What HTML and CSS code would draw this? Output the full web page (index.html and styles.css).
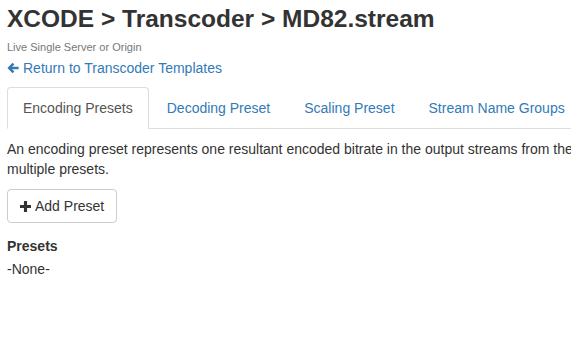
FILE: index.html
```html
<!DOCTYPE html>
<html lang="en">
<head>
    <meta charset="UTF-8">
    <meta name="viewport" content="width=device-width, initial-scale=1.0">
    <title>MD82.stream</title>
    <link rel="stylesheet" href="styles.css">
</head>
<body>
    <div class="page">
        <h1 class="title">XCODE &gt; Transcoder &gt; MD82.stream</h1>
        <div class="subtitle">Live Single Server or Origin</div>
        <a class="back-link" href="#">
            <svg class="back-icon" viewBox="0 0 14 14" width="12" height="12">
                <path d="M6.5 0.8 L0.5 7 L6.5 13.2 L8.6 11.1 L5.9 8.6 L13.5 8.6 L13.5 5.4 L5.9 5.4 L8.6 2.9 Z" fill="#337ab7"/>
            </svg>
            Return to Transcoder Templates
        </a>

        <ul class="tabs">
            <li class="tab active"><a href="#">Encoding Presets</a></li>
            <li class="tab"><a href="#">Decoding Preset</a></li>
            <li class="tab"><a href="#">Scaling Preset</a></li>
            <li class="tab"><a href="#">Stream Name Groups</a></li>
        </ul>

        <p class="intro">An encoding preset represents one resultant encoded bitrate in the output streams from the multiple presets.</p>

        <button class="btn">
            <svg class="plus-icon" viewBox="0 0 12 12" width="11" height="11">
                <path d="M4.3 0 H7.7 V4.3 H12 V7.7 H7.7 V12 H4.3 V7.7 H0 V4.3 H4.3 Z" fill="#333"/>
            </svg>
            Add Preset
        </button>

        <div class="presets">
            <div class="presets-label">Presets</div>
            <div class="presets-value">-None-</div>
        </div>
    </div>
</body>
</html>
```

FILE: styles.css
```css
html, body {
    overflow: hidden;
}
body {
    font-family: "Liberation Sans", Arial, sans-serif;
    font-size: 14px;
    line-height: 20px;
    color: #333;
    background-color: #fff;
    margin: 0;
    padding: 0 7px;
}
.page {
    width: 600px;
}
.title {
    font-size: 24.5px;
    font-weight: bold;
    line-height: 26px;
    margin: 6px 0 0 0;
    color: #333;
}
.subtitle {
    font-size: 11px;
    color: #777;
    margin-top: 8px;
    line-height: 14px;
}
.back-link {
    display: inline-flex;
    align-items: center;
    gap: 4px;
    color: #337ab7;
    text-decoration: none;
    margin-top: 4px;
}
.tabs {
    list-style: none;
    display: flex;
    margin: 8px 0 0 0;
    padding: 0;
    border-bottom: 1px solid #ddd;
}
.tab {
    margin-bottom: -1px;
}
.tab a {
    display: block;
    padding: 10px 15px;
    line-height: 20px;
    color: #337ab7;
    text-decoration: none;
    border: 1px solid transparent;
    border-radius: 4px 4px 0 0;
    margin-right: 2px;
}
.tab.active a {
    color: #555;
    background-color: #fff;
    border-color: #ddd #ddd transparent;
}
.intro {
    margin: 10px 0 10px 0;
}
.btn {
    display: inline-flex;
    align-items: center;
    gap: 4px;
    font-family: inherit;
    font-size: 14px;
    line-height: 20px;
    color: #333;
    background-color: #fff;
    border: 1px solid #ccc;
    border-radius: 4px;
    padding: 6px 12px;
    cursor: pointer;
}
.presets {
    margin-top: 13px;
}
.presets-label {
    font-weight: bold;
}
.presets-value {
    margin-top: 3px;
}
```
